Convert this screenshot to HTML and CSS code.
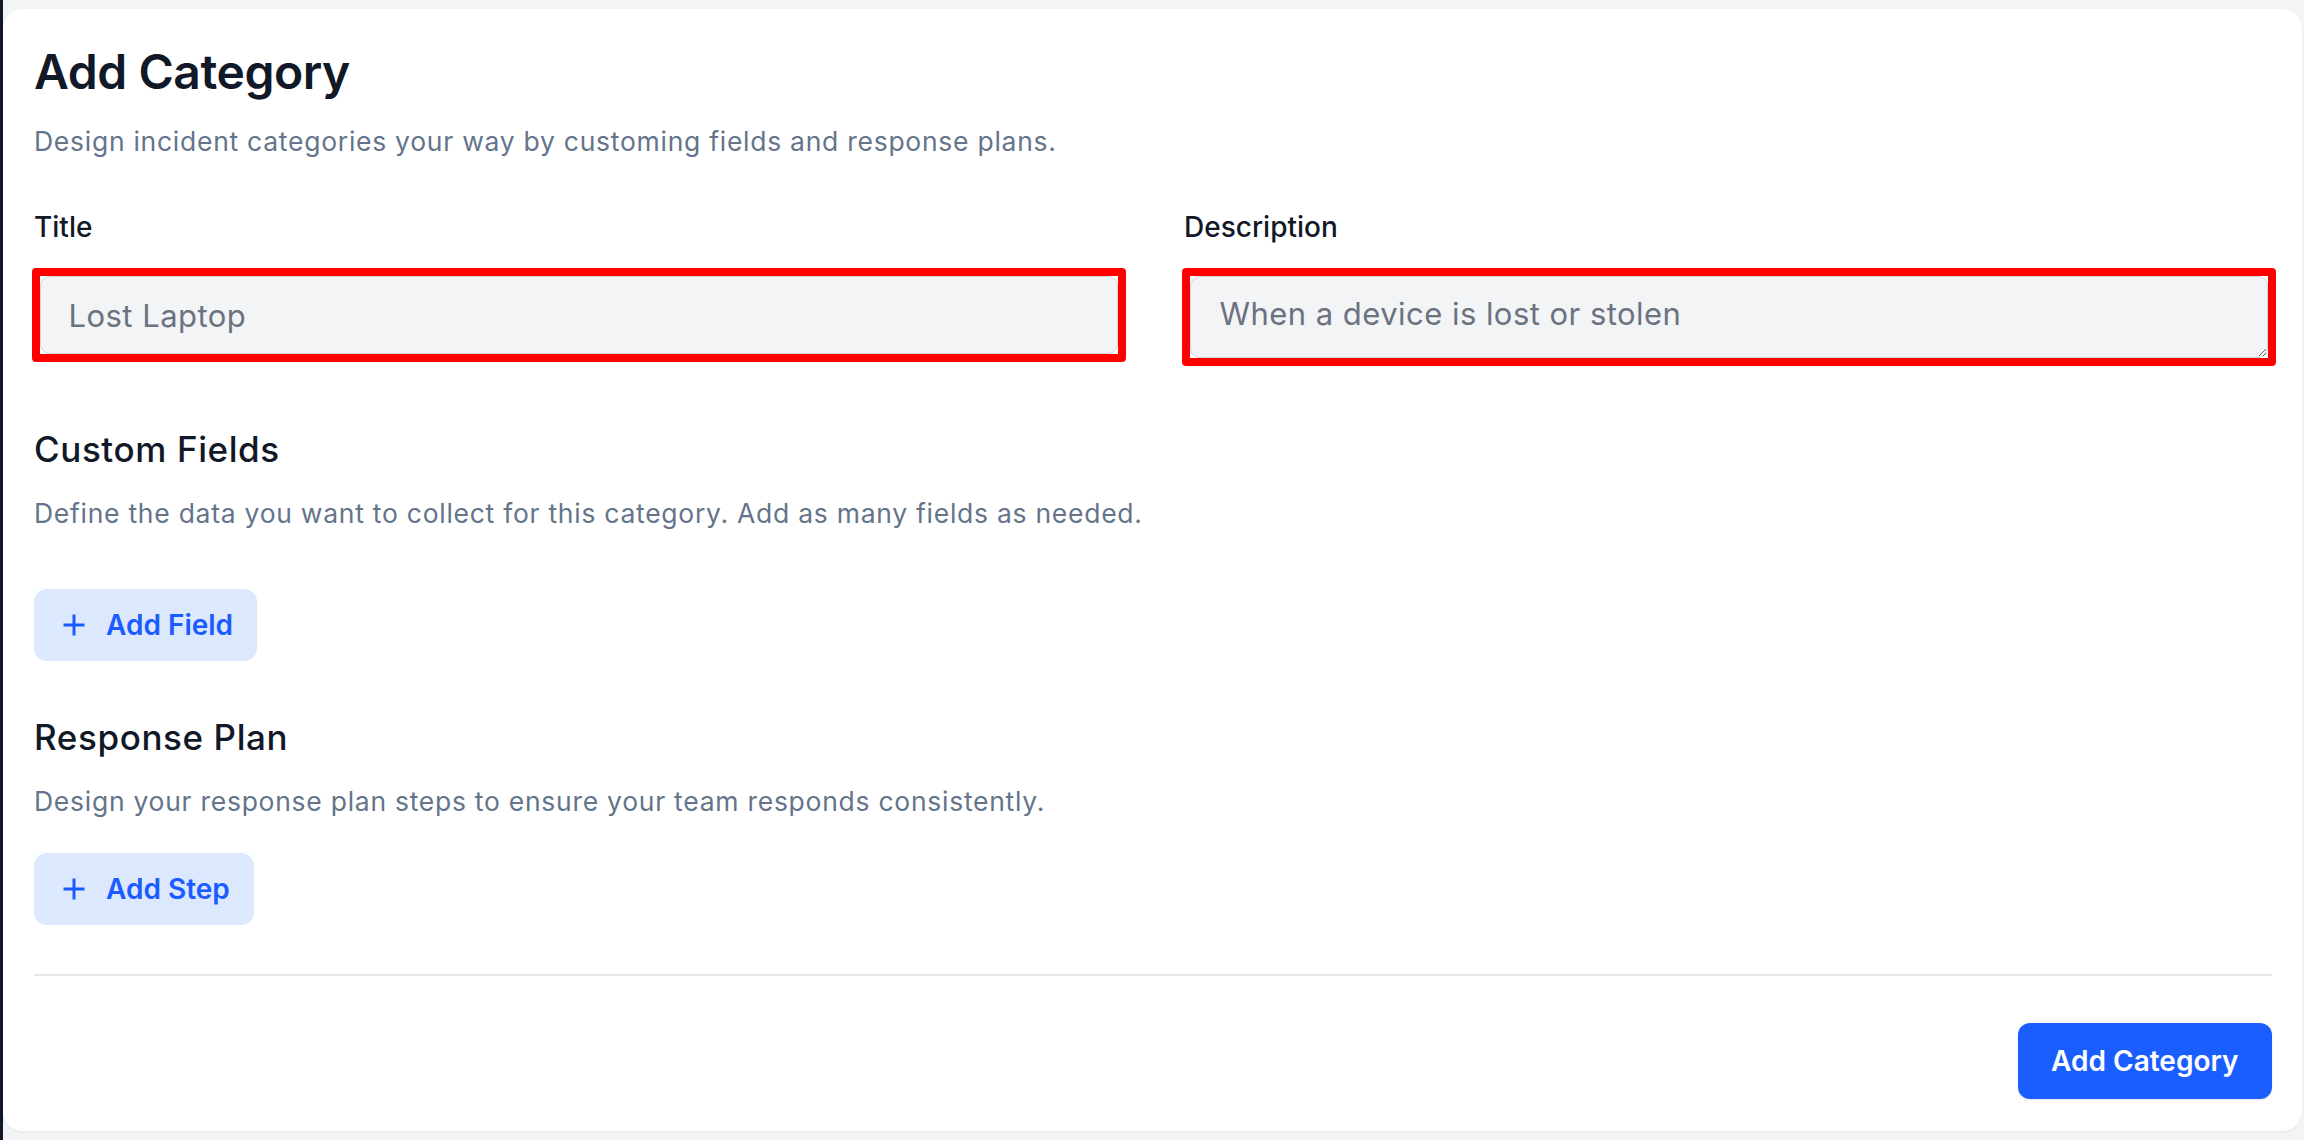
FILE: index.html
```html
<!DOCTYPE html>
<html lang="en">
<head>
<meta charset="utf-8">
<title>Add Category</title>
<link rel="stylesheet" href="styles.css">
</head>
<body>
<div class="page">
  <main class="card">
    <h1 class="title">Add Category</h1>
    <p class="lead">Design incident categories your way by customing fields and response plans.</p>

    <div class="fields">
      <div class="field">
        <label class="label" for="title">Title</label>
        <div class="highlight">
          <input class="input" id="title" type="text" value="Lost Laptop">
        </div>
      </div>
      <div class="field">
        <label class="label" for="desc">Description</label>
        <div class="highlight">
          <textarea class="textarea" id="desc">When a device is lost or stolen</textarea>
        </div>
      </div>
    </div>

    <h2 class="section-title section-custom">Custom Fields</h2>
    <p class="section-text section-text-custom">Define the data you want to collect for this category. Add as many fields as needed.</p>
    <button class="btn-soft btn-field" type="button">
      <svg class="plus" viewBox="0 0 26 26" width="26" height="26" aria-hidden="true"><path d="M13 2.5v21M2.5 13h21" stroke="currentColor" stroke-width="3" stroke-linecap="butt" fill="none"/></svg>
      <span>Add Field</span>
    </button>

    <h2 class="section-title section-response">Response Plan</h2>
    <p class="section-text section-text-response">Design your response plan steps to ensure your team responds consistently.</p>
    <button class="btn-soft btn-step" type="button">
      <svg class="plus" viewBox="0 0 26 26" width="26" height="26" aria-hidden="true"><path d="M13 2.5v21M2.5 13h21" stroke="currentColor" stroke-width="3" stroke-linecap="butt" fill="none"/></svg>
      <span>Add Step</span>
    </button>

    <hr class="divider">

    <div class="actions">
      <button class="btn-primary" type="button">Add Category</button>
    </div>
  </main>
</div>
</body>
</html>
```

FILE: styles.css
```css
* {
  box-sizing: border-box;
}

html, body {
  margin: 0;
  padding: 0;
  height: 100%;
}

body {
  font-family: Inter, "Noto Sans", "Liberation Sans", sans-serif;
  background: #f3f4f6;
  color: #111827;
}

.page {
  min-height: 1140px;
  border-left: 3px solid #111827;
  padding: 9px 2px 9px 0;
  background: #f3f4f6;
}

.card {
  background: #ffffff;
  border-radius: 20px;
  box-shadow: 0 1px 3px rgba(15, 23, 42, 0.06);
  padding: 34px 30px 32px 31px;
  height: 1122px;
  display: flex;
  flex-direction: column;
  align-items: flex-start;
}

.title {
  margin: 0;
  font-size: 48px;
  line-height: 58px;
  font-weight: 600;
  color: #111827;
  letter-spacing: -0.45px;
}

.lead {
  margin: 21px 0 0;
  font-size: 26.5px;
  line-height: 38.4px;
  letter-spacing: 0.73px;
  color: #64748b;
}

.fields {
  align-self: stretch;
  margin-top: 45.6px;
  display: grid;
  grid-template-columns: 1fr 1fr;
  column-gap: 62px;
  align-items: start;
}

.field {
  display: flex;
  flex-direction: column;
}

.label {
  font-size: 28px;
  line-height: 43px;
  font-weight: 500;
  color: #111827;
}

.highlight {
  margin: 19px -4px 0 -2px;
  border: 8px solid #ff0000;
  border-radius: 4px;
  background: #ffffff;
  display: flex;
}

.input {
  width: 100%;
  height: 78px;
  margin: 0;
  border: 1px solid #d1d5db;
  border-radius: 10px;
  background: #f3f4f6;
  padding: 0 20px 0 27.5px;
  font-family: Inter, "Noto Sans", "Liberation Sans", sans-serif;
  font-size: 31px;
  letter-spacing: 0.46px;
  color: #6b7280;
  outline: none;
}

.textarea {
  width: 100%;
  height: 82px;
  margin: 0;
  display: block;
  border: 1px solid #d1d5db;
  border-radius: 10px;
  background: #f3f4f6;
  padding: 13.5px 20px 0 28.5px;
  font-family: Inter, "Noto Sans", "Liberation Sans", sans-serif;
  font-size: 31px;
  line-height: 46px;
  letter-spacing: 0.46px;
  color: #6b7280;
  outline: none;
  resize: vertical;
}

.section-title {
  margin: 0;
  font-size: 35px;
  line-height: 44.8px;
  font-weight: 500;
  letter-spacing: 0.6px;
  color: #111827;
}

.section-custom {
  margin-top: 61.4px;
}

.section-response {
  margin-top: 54.4px;
}

.section-text {
  margin: 0;
  font-size: 26.5px;
  line-height: 38.4px;
  letter-spacing: 0.73px;
  color: #64748b;
}

.section-text-custom {
  margin-top: 21.5px;
}

.section-text-response {
  margin-top: 22px;
}

.btn-soft {
  display: inline-flex;
  align-items: center;
  gap: 19px;
  height: 72px;
  padding: 0 24px 0 27px;
  border: none;
  border-radius: 13px;
  background: #dbe8fd;
  color: #1a5cff;
  font-family: Inter, "Noto Sans", "Liberation Sans", sans-serif;
  font-size: 28px;
  font-weight: 600;
  cursor: pointer;
}

.btn-field {
  margin-top: 56.9px;
}

.btn-step {
  margin-top: 32.4px;
}

.plus {
  display: block;
  flex: none;
}

.divider {
  align-self: stretch;
  margin: 49px 0 0;
  border: none;
  border-top: 2px solid #e6e7eb;
  height: 0;
}

.actions {
  align-self: stretch;
  display: flex;
  justify-content: flex-end;
  margin-top: 47px;
}

.btn-primary {
  height: 76px;
  padding: 0 33.5px;
  border: none;
  border-radius: 12px;
  background: #1b5eff;
  color: #ffffff;
  font-family: Inter, "Noto Sans", "Liberation Sans", sans-serif;
  font-size: 28px;
  font-weight: 600;
  box-shadow: 0 1px 2px rgba(15, 23, 42, 0.12);
  cursor: pointer;
}
```
